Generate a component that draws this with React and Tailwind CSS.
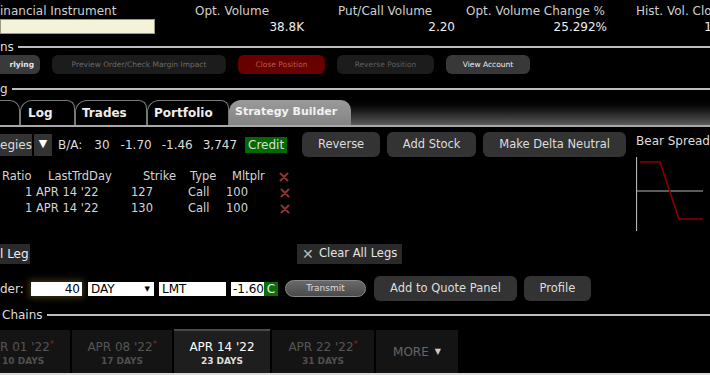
const font = { fontFamily: '"DejaVu Sans", "Liberation Sans", sans-serif' };

const Section = ({ label, textClass = "" }) => (
	<div className="flex items-center gap-[4px] h-[14px]">
		<span className={`text-[12px] leading-none text-[#ddd] whitespace-nowrap ${textClass}`}>{label}</span>
		<div className="flex-1 h-[2px] bg-[#bdbdbd]" />
	</div>
);

const HeadCol = ({ label, value, width, ml }) => (
	<div className={`flex flex-col shrink-0 ${width} ${ml}`}>
		<span className="text-[12px] leading-[14px] text-[#cfcfcf] whitespace-nowrap">{label}</span>
		<span className="text-[12px] leading-[14px] mt-[2px] text-[#eee] text-right whitespace-nowrap">{value}</span>
	</div>
);

// small dark-red remove cross
const Red = () => (
	<svg width="10" height="10" viewBox="0 0 10 10">
		<path d="M1.5 1.5 L8.5 8.5 M8.5 1.5 L1.5 8.5" stroke="#8a3434" strokeWidth="2" strokeLinecap="round" />
	</svg>
);

const legs = [
	{ ratio: 1, day: "APR 14 '22", strike: 127, type: "Call", mult: 100 },
	{ ratio: 1, day: "APR 14 '22", strike: 130, type: "Call", mult: 100 },
];

const expiries = [
	{ d: "R 01 '22", n: "10 DAYS", star: true, w: "w-[70px]", left: true },
	{ d: "APR 08 '22", n: "17 DAYS", star: true, w: "w-[100px]" },
	{ d: "APR 14 '22", n: "23 DAYS", active: true, w: "w-[96px]" },
	{ d: "APR 22 '22", n: "31 DAYS", star: true, w: "w-[102px]" },
];

export default function App() {
	return (
		<div style={font} className="w-[710px] h-[375px] bg-black overflow-hidden text-[#ddd]">
			{/* header */}
			<div className="flex h-[40px] pt-[4px] overflow-hidden">
				<div className="flex flex-col w-[160px] shrink-0">
					<span className="text-[12px] leading-[14px] text-[#cfcfcf] whitespace-nowrap">inancial Instrument</span>
					<div className="mt-[1px] w-[155px] h-[15px] bg-[#f4f2d8] border border-[#9a9a80]" />
				</div>
				<HeadCol label="Opt. Volume" value="38.8K" width="w-[109px]" ml="ml-[35px]" />
				<HeadCol label="Put/Call Volume" value="2.20" width="w-[117px]" ml="ml-[34px]" />
				<HeadCol label="Opt. Volume Change %" value="25.292%" width="w-[141px]" ml="ml-[11px]" />
				<HeadCol label="Hist. Vol. Close" value="1" width="w-[76px]" ml="ml-[29px]" />
			</div>

			<Section label="ns" />

			{/* action buttons */}
			<div className="flex items-center h-[19px] mt-[1px] text-[7.5px] whitespace-nowrap">
				<div className="w-[40px] h-full rounded-r-[6px] bg-[#3a3a3a] text-[#e5e5e5] flex items-center justify-end pr-[6px] font-bold">rlying</div>
				<div className="ml-[12px] w-[174px] h-full rounded-[6px] bg-[#1c1c1c] text-[#6a6a6a] flex items-center justify-center">Preview Order/Check Margin Impact</div>
				<div className="ml-[12px] w-[87px] h-full rounded-[6px] bg-[#680000] text-[#b05a5a] flex items-center justify-center">Close Position</div>
				<div className="ml-[12px] w-[97px] h-full rounded-[6px] bg-[#1c1c1c] text-[#5e5e5e] flex items-center justify-center">Reverse Position</div>
				<div className="ml-[12px] w-[84px] h-full rounded-[6px] bg-[#383838] text-[#eee] flex items-center justify-center">View Account</div>
			</div>

			<div className="mt-[8px]">
				<Section label="g" />
			</div>

			{/* tab strip */}
			<div className="mt-[1px] h-[30px] bg-gradient-to-b from-black via-[#1c1c1c] to-[#5c5c5c] flex items-end border-b-[2px] border-[#a8a8a8]">
				<div className="flex items-end h-[25px] w-full whitespace-nowrap">
					<div className="w-[20px] h-full rounded-tr-[10px] border-t border-r border-[#777] bg-black" />
					{["Log", "Trades", "Portfolio"].map((t, i) => (
						<div
							key={t}
							className={`h-full rounded-tl-[12px] rounded-tr-[8px] border-t border-l border-r border-[#777] bg-black flex items-center text-[12px] font-bold text-[#eee] ${
								i === 0 ? "w-[55px] pl-[7px]" : i === 1 ? "w-[72px] pl-[6px]" : "w-[82px] pl-[6px]"
							}`}
						>
							{t}
						</div>
					))}
					<div className="h-full w-[122px] rounded-tl-[12px] rounded-tr-[10px] bg-gradient-to-b from-[#9a9a9a] to-[#848484] flex items-center pl-[6px] text-[11px] font-bold text-[#f2f2f2]">
						Strategy Builder
					</div>
				</div>
			</div>

			{/* strategy area */}
			<div className="flex mt-[4px] whitespace-nowrap">
				<div className="w-[640px] flex flex-col">
					<div className="flex items-center h-[26px] pt-[1px]">
						<div className="w-[32px] h-[22px] bg-[#333] flex items-center text-[12px] text-[#ddd]">egies</div>
						<div className="ml-[2px] w-[18px] h-[22px] bg-[#333] flex items-center justify-center text-[11px] text-white">▼</div>
						<div className="ml-[6px] flex items-center text-[12px] text-[#ddd]">
							<span>B/A:</span>
							<span className="ml-[12px]">30</span>
							<span className="ml-[11px]">-1.70</span>
							<span className="ml-[10px]">-1.46</span>
							<span className="ml-[10px]">3,747</span>
						</div>
						<div className="ml-[8px] w-[42px] h-[16px] bg-[#006a00] text-[12px] leading-none text-[#ddd] flex items-center justify-center">Credit</div>
						<div className="ml-[15px] w-[78px] h-[25px] rounded-[6px] bg-[#333] flex items-center justify-center text-[11.5px]">Reverse</div>
						<div className="ml-[7px] w-[89px] h-[25px] rounded-[6px] bg-[#333] flex items-center justify-center text-[11.5px]">Add Stock</div>
						<div className="ml-[7px] w-[143px] h-[25px] rounded-[6px] bg-[#333] flex items-center justify-center text-[11.5px]">Make Delta Neutral</div>
					</div>

					{/* legs table */}
					<div className="mt-[12px] flex flex-col text-[11.5px] text-[#d5d5d5]">
						<div className="flex items-center h-[16px]">
							<span className="w-[34px] pl-[2px]">Ratio</span>
							<span className="w-[95px] pl-[14px]">LastTrdDay</span>
							<span className="w-[61px] pl-[14px]">Strike</span>
							<span className="w-[42px]">Type</span>
							<span className="w-[47px]">Mltplr</span>
							<Red />
						</div>
						{legs.map((l, i) => (
							<div key={i} className="flex items-center h-[16px]">
								<span className="w-[34px] pl-[25px]">{l.ratio}</span>
								<span className="w-[97px] pl-[2px]">{l.day}</span>
								<span className="w-[57px]">{l.strike}</span>
								<span className="w-[38px]">{l.type}</span>
								<span className="w-[54px]">{l.mult}</span>
								<Red />
							</div>
						))}
					</div>
				</div>

				{/* payoff */}
				<div className="ml-[3px] flex-1 flex flex-col">
					<span className="mt-[3px] text-[12px] leading-[14px] text-[#ddd]">Bear Spread</span>
					<svg width="67" height="74" className="mt-[9px]" viewBox="0 0 67 74">
						<line x1="0.5" y1="0" x2="0.5" y2="74" stroke="#b5b5b5" strokeWidth="1.2" />
						<line x1="0" y1="34" x2="67" y2="34" stroke="#b5b5b5" strokeWidth="1.2" />
						<polyline points="4,5 24,5 43,62 67,62" fill="none" stroke="#8a0000" strokeWidth="1.6" />
					</svg>
				</div>
			</div>

			{/* leg actions */}
			<div className="flex items-center mt-[13px] h-[20px] text-[12px] whitespace-nowrap">
				<div className="w-[30px] h-full bg-[#2a2a2a] flex items-center text-[#eee]">l Leg</div>
				<div className="ml-[267px] w-[105px] h-full bg-[#2a2a2a] flex items-center pl-[5px] gap-[5px] text-[#e5e5e5]">
					<span className="text-[14px] leading-none font-light text-[#bbb]">✕</span>
					<span className="text-[11.5px]">Clear All Legs</span>
				</div>
			</div>

			{/* order row */}
			<div className="flex items-center mt-[12px] h-[25px] text-[12px] whitespace-nowrap">
				<span className="w-[31px] text-[#ddd]">der:</span>
				<div className="w-[51px] h-[14px] bg-white text-black text-right pr-[2px] leading-[14px] shadow-[0_0_6px_2px_#3c3518]">40</div>
				<div className="ml-[6px] w-[66px] h-[14px] bg-white text-black leading-[14px] flex items-center justify-between pl-[3px] pr-[4px]">
					<span>DAY</span>
					<span className="text-[7px]">▼</span>
				</div>
				<div className="ml-[5px] w-[67px] h-[14px] bg-white text-black leading-[14px] pl-[3px]">LMT</div>
				<div className="ml-[5px] w-[33px] h-[14px] bg-white text-black leading-[14px] text-right">-1.60</div>
				<div className="w-[14px] h-[14px] bg-[#0a6e0a] text-[#eee] leading-[14px] text-center">C</div>
				<div className="ml-[7px] w-[81px] h-[17px] rounded-full bg-gradient-to-b from-[#6a6a6a] to-[#4a4a4a] border border-[#8a8a8a] flex items-center justify-center text-[9px] text-[#ddd]">Transmit</div>
				<div className="ml-[8px] w-[143px] h-[25px] rounded-[6px] bg-[#333] flex items-center justify-center text-[11.5px] text-[#ddd]">Add to Quote Panel</div>
				<div className="ml-[7px] w-[67px] h-[25px] rounded-[6px] bg-[#333] flex items-center justify-center text-[11.5px] text-[#ddd]">Profile</div>
			</div>

			<div className="mt-[7px]">
				<Section label="Chains" textClass="pl-[2px]" />
			</div>

			{/* expiry tabs */}
			<div className="mt-[7px] flex items-end gap-[2px] h-[44px] whitespace-nowrap">
				{expiries.map((e) => (
					<div
						key={e.d}
						className={`${e.w} flex flex-col justify-center pt-[3px] ${e.left ? "items-start" : "items-center"} ${
							e.active ? "h-[44px] bg-[#1e1e1e] border-t-[2px] border-[#4a4a4a]" : "h-[43px] bg-[#141414]"
						}`}
					>
						<span className={`text-[12px] leading-[14px] ${e.active ? "text-white" : "text-[#555]"}`}>
							{e.d}
							{e.star && <sup className="text-[#a02020] text-[8px]">*</sup>}
						</span>
						<span className={`text-[9px] leading-[12px] mt-[1px] font-bold ${e.active ? "text-[#ddd]" : "text-[#505050]"} ${e.left ? "pl-[2px]" : ""}`}>{e.n}</span>
					</div>
				))}
				<div className="w-[82px] h-[43px] bg-[#141414] flex items-center justify-center gap-[6px] text-[12px] text-[#666]">
					<span>MORE</span>
					<span className="text-[8px] text-[#ccc]">▼</span>
				</div>
			</div>
			<div className="h-[2px] bg-[#dcdcdc]" />
		</div>
	);
}
